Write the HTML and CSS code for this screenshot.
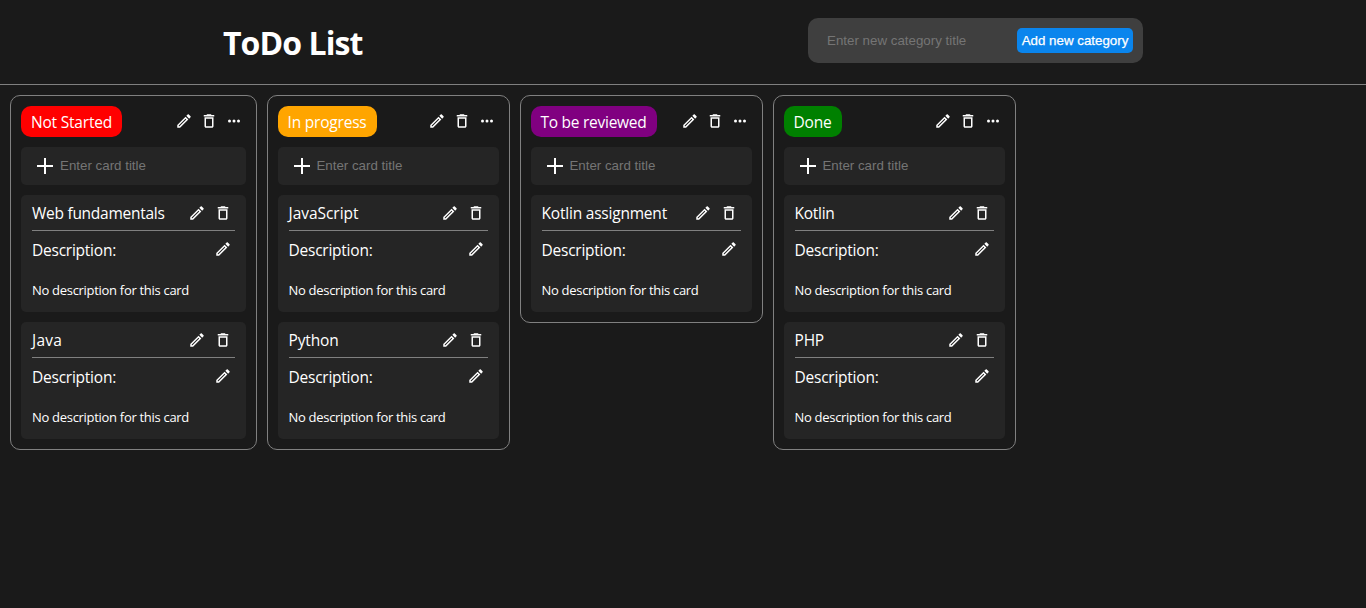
FILE: index.html
```html
<!DOCTYPE html>
<html lang="en">
<head>
<meta charset="utf-8">
<title>ToDo List</title>
<link rel="stylesheet" href="styles.css">
</head>
<body>
<svg class="sprite" aria-hidden="true">
  <symbol id="edit" viewBox="0 0 24 24"><path d="m14.06 9.02.92.92L5.92 19H5v-.92l9.06-9.06M17.66 3c-.25 0-.51.1-.7.29l-1.83 1.83 3.75 3.75 1.83-1.83c.39-.39.39-1.02 0-1.41l-2.34-2.34c-.2-.2-.45-.29-.71-.29zm-3.6 3.19L3 17.25V21h3.75L17.81 9.94l-3.75-3.75z"/></symbol>
  <symbol id="trash" viewBox="0 0 24 24"><path d="M16 9v10H8V9h8m-1.5-6h-5l-1 1H5v2h14V4h-3.5l-1-1zM18 7H6v12c0 1.1.9 2 2 2h8c1.1 0 2-.9 2-2V7z"/></symbol>
  <symbol id="more" viewBox="0 0 24 24"><path d="M6 10a2 2 0 1 0 0 4 2 2 0 0 0 0-4zm12 0a2 2 0 1 0 0 4 2 2 0 0 0 0-4zm-6 0a2 2 0 1 0 0 4 2 2 0 0 0 0-4z"/></symbol>
  <symbol id="plus" viewBox="0 0 16 16"><path d="M7 0h2v7h7v2H9v7H7V9H0V7h7z"/></symbol>
</svg>
<header class="header">
  <h1 class="title"><span class="fit">ToDo List</span></h1>
  <form class="new-category">
    <input class="category-input" placeholder="Enter new category title">
    <button class="category-button" type="button">Add new category</button>
  </form>
</header>
<main class="board" id="board"></main>
<script src="app.js"></script>
</body>
</html>
```
FILE: styles.css
```css
* { box-sizing: border-box; }
body {
  margin: 0;
  background: #1a1a1a;
  color: #fff;
  font-family: "Open Sans", "Noto Sans", sans-serif;
  font-size: 15.5px;
  overflow: hidden;
}
.sprite { display: none; }
.icon { width: 18px; height: 18px; fill: #fff; display: block; flex: none; }
.header {
  height: 85px;
  border-bottom: 1px solid #808080;
  display: flex;
  justify-content: space-between;
  align-items: flex-start;
  padding: 18px 223px 0;
}
.title { margin: 0; font-size: 32px; line-height: 49px; font-weight: 700; white-space: nowrap; }
.new-category {
  width: 335px;
  height: 45px;
  border-radius: 10px;
  background: #3f3f3f;
  padding: 10px;
  display: flex;
  justify-content: space-between;
}
.category-input, .card-input {
  border: 0;
  padding: 0;
  background: transparent;
  color: #fff;
  min-width: 0;
  font: 13.33px "Liberation Sans", Arial, sans-serif;
}
.category-input { width: 180px; margin-left: 9px; }
.category-input::placeholder, .card-input::placeholder { color: #757575; opacity: 1; }
.category-button {
  width: 116px;
  height: 25px;
  padding: 0;
  border: 0;
  border-radius: 5px;
  background: #0a85ed;
  color: #fff;
  font: 13.33px "Liberation Sans", Arial, sans-serif;
  -webkit-text-stroke: 0.25px #fff;
  white-space: nowrap;
}
.board { display: flex; align-items: flex-start; gap: 10px; padding: 10px; }
.column {
  width: 243px;
  flex: none;
  border: 1px solid #808080;
  border-radius: 10px;
  padding: 10px;
  display: flex;
  flex-direction: column;
  gap: 10px;
}
.column-wide { width: 247px; }
.column-head { display: flex; justify-content: space-between; height: 31px; }
.tag { border-radius: 10px; padding: 0 9.5px; line-height: 32px; white-space: nowrap; }
.red { background: #f00; width: 101px; padding-left: 10px; }
.orange { background: #ffa500; width: 99px; }
.purple { background: #800080; width: 126px; }
.green { background: #008000; width: 58px; }
.column-icons { display: flex; gap: 7px; padding: 6px 3px 0 0; }
.add-card {
  height: 38px;
  border-radius: 5px;
  background: #252525;
  display: flex;
  align-items: center;
  gap: 7px;
  padding-left: 16px;
}
.column:not(.column-wide) .add-card { gap: 6.4px; }
.icon-plus { width: 16px; height: 16px; }
.card-input { width: 150px; height: 36px; padding-bottom: 2px; }
.card { height: 117px; border-radius: 5px; background: #252525; padding: 0 11px; }
.card-head { height: 36px; border-bottom: 1px solid #808080; display: flex; justify-content: space-between; align-items: center; padding: 1px 3px 0 0; }
.card-icons { display: flex; gap: 8px; }
.description-head { height: 38px; display: flex; justify-content: space-between; align-items: center; padding: 0 3px 0 0; }
.description-head .icon { margin-bottom: 2px; }
.description { margin: 10px 0 0; font-size: 13px; line-height: 22px; }
.fit { white-space: nowrap; }
.column:not(.column-wide) .card .fit { margin-left: -0.5px; }
```
FILE: app.js
```
const categories = [
  { name: 'Not Started', color: 'red', wide: true, cards: ['Web fundamentals', 'Java'] },
  { name: 'In progress', color: 'orange', cards: ['JavaScript', 'Python'] },
  { name: 'To be reviewed', color: 'purple', cards: ['Kotlin assignment'] },
  { name: 'Done', color: 'green', cards: ['Kotlin', 'PHP'] },
];

// Label widths in pixels; letter spacing is adjusted to keep them.
const labelWidths = {
  'ToDo List': 139.5, 'Not Started': 81, 'In progress': 79, 'To be reviewed': 106, 'Done': 38,
  'Web fundamentals': 132.5, 'Java': 30, 'JavaScript': 70, 'Python': 50,
  'Kotlin assignment': 125.5, 'Kotlin': 40, 'PHP': 29.5,
  'Description:': 84, 'No description for this card': 157,
};

const icon = (name) => `<svg class="icon icon-${name}"><use href="#${name}"/></svg>`;

const card = (title) => `
  <article class="card">
    <div class="card-head"><span class="fit">${title}</span><div class="card-icons">${icon('edit')}${icon('trash')}</div></div>
    <div class="description-head"><span class="fit">Description:</span>${icon('edit')}</div>
    <p class="description"><span class="fit">No description for this card</span></p>
  </article>`;

document.getElementById('board').innerHTML = categories.map((c) => `
  <section class="column ${c.wide ? 'column-wide' : ''}">
    <div class="column-head">
      <div class="tag ${c.color}"><span class="fit">${c.name}</span></div>
      <div class="column-icons">${icon('edit')}${icon('trash')}${icon('more')}</div>
    </div>
    <div class="add-card">${icon('plus')}<input class="card-input" placeholder="Enter card title"></div>
    ${c.cards.map(card).join('')}
  </section>`).join('');

document.querySelectorAll('.fit').forEach((el) => {
  const text = el.textContent;
  const spacing = (labelWidths[text] - el.getBoundingClientRect().width) / text.length;
  el.style.letterSpacing = `${spacing}px`;
});
```
